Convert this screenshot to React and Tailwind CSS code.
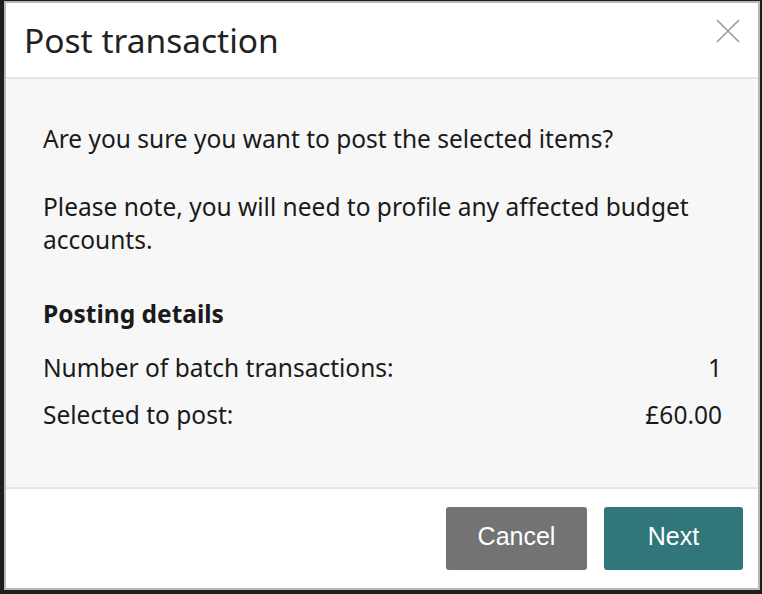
export default function App() {
  return (
    <div className="w-[762px] h-[594px] bg-[#1e1e1e] pl-[4px] pt-[1px] pr-[2px] pb-[4px]">
      <div
        className="h-full flex flex-col bg-white border-2 border-[#b8b8b8] text-[#1a1a1a]"
        style={{ fontFamily: '"Noto Sans", "Open Sans", sans-serif' }}
      >
        {/* Header */}
        <div className="h-[76px] shrink-0 flex items-center justify-between pl-[18px] pr-[18px] border-b-2 border-[#e6e6e6]">
          <h1 className="text-[33.5px] leading-none text-[#222] pt-[2px]">Post transaction</h1>
          <button type="button" className="w-[24px] h-[24px] -mt-[18px] text-[#9a9a9a]">
            <svg viewBox="0 0 24 24" className="w-[24px] h-[24px]" fill="none" stroke="currentColor" strokeWidth="1.6">
              <path d="M1 1L23 23M23 1L1 23" />
            </svg>
          </button>
        </div>

        {/* Body */}
        <div className="flex-1 bg-[#f7f7f7] pl-[37px] pr-[36px] pt-[43px] text-[24.5px] leading-[33px]">
          <p>Are you sure you want to post the selected items?</p>
          <p className="mt-[35px]">Please note, you will need to profile any affected budget accounts.</p>
          <h2 className="mt-[41px] font-bold">Posting details</h2>
          <div className="mt-[21px] flex justify-between">
            <span>Number of batch transactions:</span>
            <span>1</span>
          </div>
          <div className="mt-[14px] flex justify-between">
            <span>Selected to post:</span>
            <span>£60.00</span>
          </div>
        </div>

        {/* Footer */}
        <div
          className="h-[101px] shrink-0 flex items-start justify-end gap-[17px] pt-[18px] pr-[15px] border-t-2 border-[#e6e6e6]"
          style={{ fontFamily: '"Liberation Sans", Arial, sans-serif' }}
        >
          <button type="button" className="w-[141px] h-[63px] pb-[4px] rounded-[3px] bg-[#737373] text-white text-[25px]">
            Cancel
          </button>
          <button type="button" className="w-[139px] h-[63px] pb-[4px] rounded-[3px] bg-[#31777a] text-white text-[25px]">
            Next
          </button>
        </div>
      </div>
    </div>
  );
}
